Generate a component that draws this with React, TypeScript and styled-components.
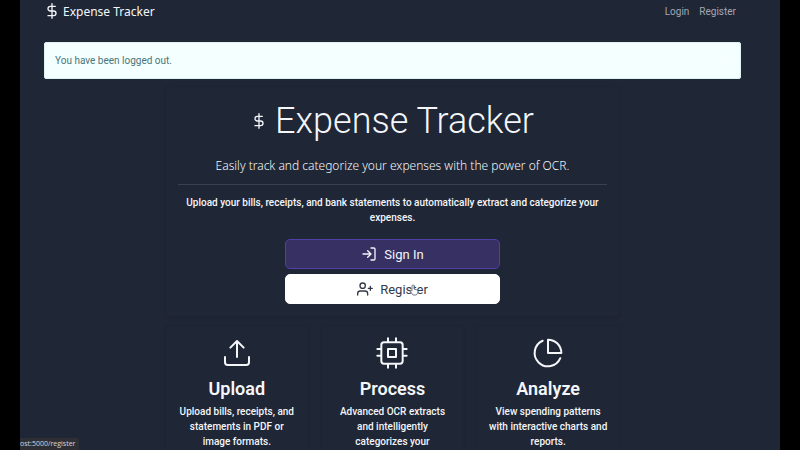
import React from "react";
import styled, { createGlobalStyle } from "styled-components";

const Global = createGlobalStyle`
  * { box-sizing: border-box; }
  html, body, #root { height: 100%; }
  body { margin: 0; background: #000; overflow: hidden; color: #f4f6fa; font: 10px/15px Roboto, sans-serif; }
  h1, h2, p { margin: 0; }
  a { color: inherit; text-decoration: none; }
`;

const Screen = styled.div`
  position: relative;
  height: 100%;
  margin: 0 20px;
  background: #1f2636;
  overflow: hidden;
`;
const Nav = styled.nav`
  display: flex;
  align-items: center;
  justify-content: space-between;
  height: 22px;
  padding: 0 44px 0 24px;
`;
const Brand = styled.a`
  display: flex;
  align-items: center;
  gap: 3px;
  font-family: "Noto Sans", sans-serif;
  font-size: 12px;
`;
const Links = styled.div`
  display: flex;
  gap: 10px;
  color: #a3a8b5;
`;
const Container = styled.main`
  padding: 0 39px 0 24px;
`;
const Alert = styled.div`
  display: flex;
  align-items: center;
  justify-content: space-between;
  height: 37px;
  margin-top: 20px;
  padding: 0 10px;
  border: 1px solid #dff3f3;
  border-radius: 2px;
  background: #f4ffff;
  color: #48757a;
`;
const Close = styled.button`
  display: flex;
  padding: 0;
  border: 0;
  background: none;
  color: #fff;
`;
const Content = styled.div`
  width: 65%;
  margin: 0 auto;
`;
const Hero = styled.section`
  margin-top: 8px;
  padding: 9px 12px 12px;
  border-radius: 3px;
  text-align: center;
  box-shadow: 0 1px 3px #1c2232;
`;
const Title = styled.h1`
  display: flex;
  align-items: center;
  justify-content: center;
  gap: 8px;
  font-size: 36px;
  line-height: 50px;
  font-weight: 300;
`;
const Lead = styled.p`
  margin-top: 10px;
  font-family: "Noto Sans", sans-serif;
  font-size: 12px;
  line-height: 20px;
  font-weight: 300;
`;
const Rule = styled.hr`
  height: 1px;
  margin: 8px 0 10px;
  border: 0;
  background: #3b4151;
`;
const Text = styled.p`
  font-weight: 500;
`;
const Actions = styled.div`
  display: grid;
  gap: 5px;
  width: 50%;
  margin: 14px auto 0;
`;
const Button = styled.button<{ $primary?: boolean }>`
  display: flex;
  align-items: center;
  justify-content: center;
  gap: 7px;
  height: 30px;
  border: 1px solid ${(p) => (p.$primary ? "#4f3fa8" : "#fff")};
  border-radius: 5px;
  background: ${(p) => (p.$primary ? "#373163" : "#fff")};
  color: ${(p) => (p.$primary ? "#f4f6fa" : "#333a49")};
  font: inherit;
  font-size: 13px;
`;
const Cards = styled.div`
  display: grid;
  grid-template-columns: repeat(3, 1fr);
  gap: 14px;
  margin-top: 10px;
`;
const Card = styled.article`
  display: flex;
  flex-direction: column;
  align-items: center;
  padding: 11px 10px;
  border-radius: 3px;
  text-align: center;
  box-shadow: 0 1px 3px #1c2232;
`;
const CardTitle = styled.h2`
  margin: 8px 0 3px;
  font-size: 18px;
  line-height: 24px;
  font-weight: 600;
`;
const Status = styled.div`
  position: absolute;
  left: 0;
  bottom: 0;
  padding: 0 4px 0 0;
  border-radius: 0 2px 0 0;
  background: #2d2f35;
  color: #d5d7dc;
  font: 7px/12px "Open Sans", sans-serif;
`;
const Label = styled.span`
  position: relative;
`;
const Cursor = styled.svg`
  position: absolute;
  left: 60%;
  top: 2px;
`;

const paths = {
  dollar: "M12 1v22M17 5H9.500a3.500 3.500 0 0 0 0 7h5a3.500 3.500 0 0 1 0 7H6",
  login: "M15 3h4a2 2 0 0 1 2 2v14a2 2 0 0 1-2 2h-4M10 17l5-5-5-5M15 12H3",
  user: "M16 21v-2a4 4 0 0 0-4-4H5a4 4 0 0 0-4 4v2M12.500 7a4 4 0 1 1-8 0 4 4 0 0 1 8 0zM20 8v6M23 11h-6",
  upload: "M21 15v4a2 2 0 0 1-2 2H5a2 2 0 0 1-2-2v-4M17 8l-5-5-5 5M12 3v12",
  cpu: "M6 4h12a2 2 0 0 1 2 2v12a2 2 0 0 1-2 2H6a2 2 0 0 1-2-2V6a2 2 0 0 1 2-2zM9 9h6v6H9zM9 1v3M15 1v3M9 20v3M15 20v3M20 9h3M20 14h3M1 9h3M1 14h3",
  pie: "M21.210 15.890A10 10 0 1 1 8 2.830M22 12A10 10 0 0 0 12 2v10z",
  close: "M4 4l16 16M20 4L4 20",
};

function Icon({ name, size, stroke = 2 }: { name: keyof typeof paths; size: number; stroke?: number }) {
  return (
    <svg width={size} height={size} viewBox="0 0 24 24" fill="none" stroke="currentColor" strokeWidth={stroke} strokeLinecap="round" strokeLinejoin="round" aria-hidden="true">
      <path d={paths[name]} />
    </svg>
  );
}

const features: { icon: keyof typeof paths; title: string; text: string }[] = [
  { icon: "upload", title: "Upload", text: "Upload bills, receipts, and statements in PDF or image formats." },
  { icon: "cpu", title: "Process", text: "Advanced OCR extracts and intelligently categorizes your" },
  { icon: "pie", title: "Analyze", text: "View spending patterns with interactive charts and reports." },
];

export default function App() {
  return (
    <>
      <Global />
      <Screen>
        <Nav>
          <Brand href="#"><Icon name="dollar" size={16} />Expense Tracker</Brand>
          <Links><a href="#login">Login</a><a href="#register">Register</a></Links>
        </Nav>
        <Container>
          <Alert role="alert">
            You have been logged out.
            <Close aria-label="Close"><Icon name="close" size={10} /></Close>
          </Alert>
          <Content>
            <Hero>
              <Title><Icon name="dollar" size={16} />Expense Tracker</Title>
              <Lead>Easily track and categorize your expenses with the power of OCR.</Lead>
              <Rule />
              <Text>Upload your bills, receipts, and bank statements to automatically extract and categorize your expenses.</Text>
              <Actions>
                <Button $primary><Icon name="login" size={16} />Sign In</Button>
                <Button>
                  <Icon name="user" size={16} />
                  <Label>
                    Register
                    <Cursor width="10" height="12" viewBox="0 0 10 12" fill="#fff" stroke="#777d88" strokeLinejoin="round" aria-hidden="true">
                      <path d="M3 7V2q0-1 1-1t1 1v3l3 1q1 0 1 2-1 3-2 3H4L1 7q1-1 2 0z" />
                    </Cursor>
                  </Label>
                </Button>
              </Actions>
            </Hero>
            <Cards>
              {features.map((f) => (
                <Card key={f.title}>
                  <Icon name={f.icon} size={32} stroke={1.5} />
                  <CardTitle>{f.title}</CardTitle>
                  <Text>{f.text}</Text>
                </Card>
              ))}
            </Cards>
          </Content>
        </Container>
        <Status>ost:5000/register</Status>
      </Screen>
    </>
  );
}
